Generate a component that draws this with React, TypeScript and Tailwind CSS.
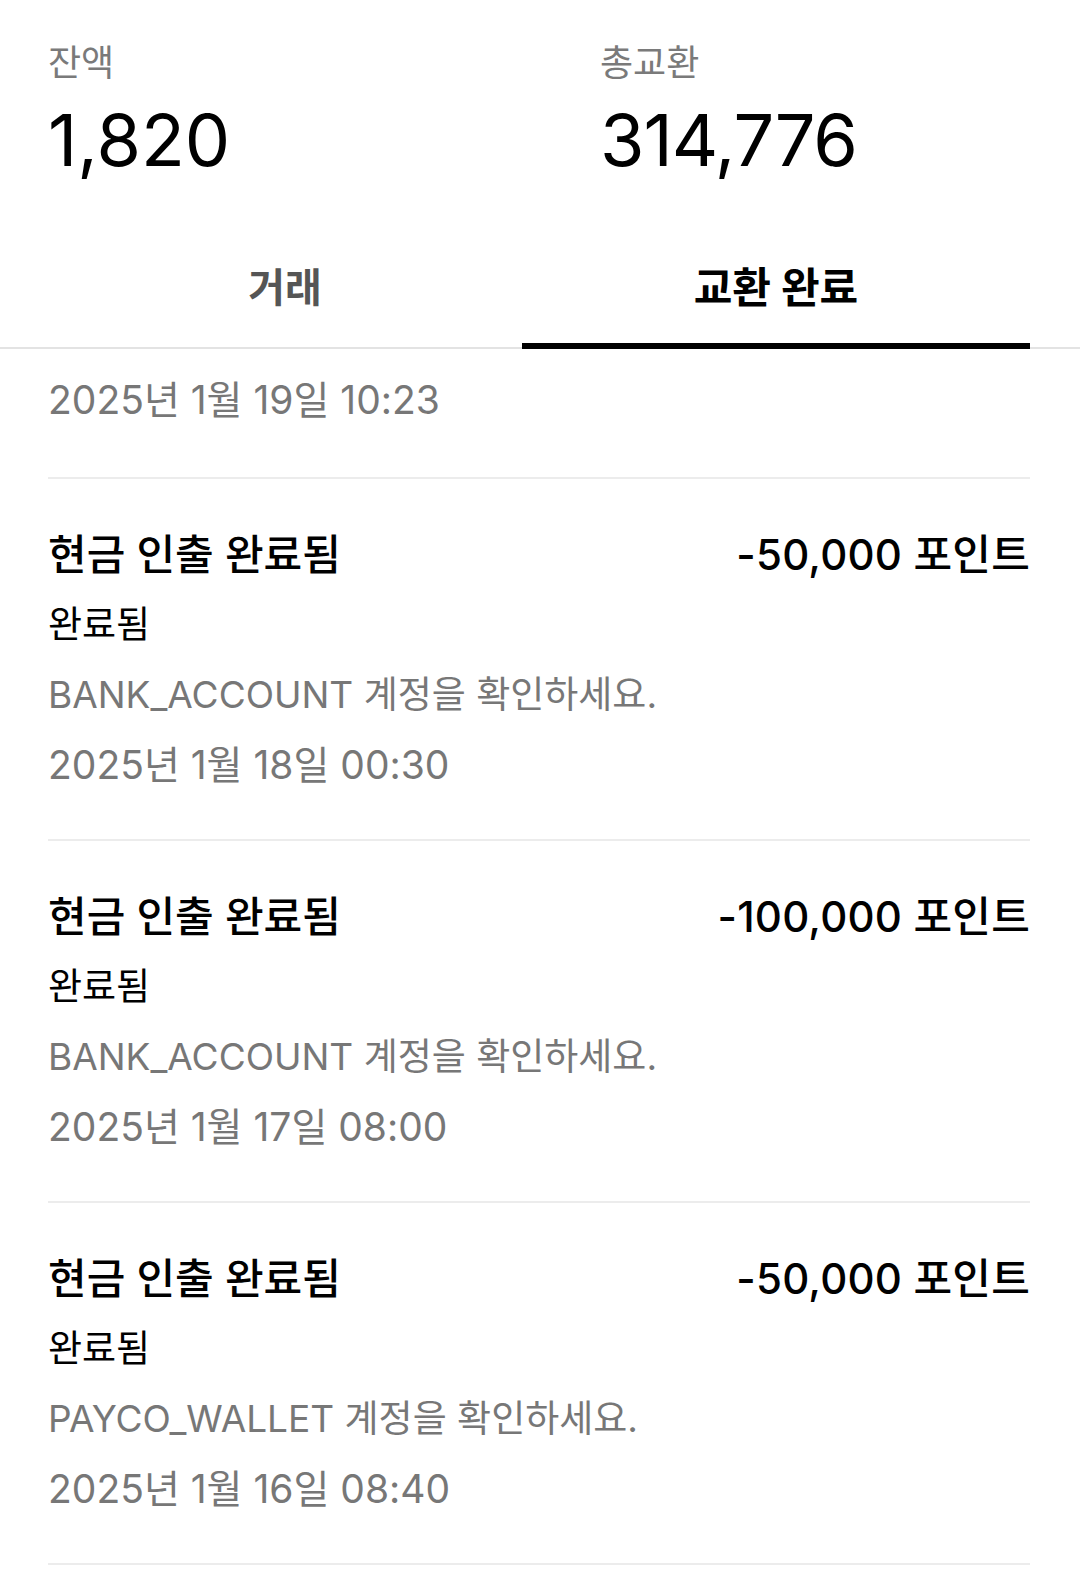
import React from "react";

const font = { fontFamily: 'Inter, "Noto Sans CJK KR", sans-serif' };

const items = [
	{ amount: "-50,000 포인트", account: "BANK_ACCOUNT", date: "2025년 1월 18일 00:30" },
	{ amount: "-100,000 포인트", account: "BANK_ACCOUNT", date: "2025년 1월 17일 08:00" },
	{ amount: "-50,000 포인트", account: "PAYCO_WALLET", date: "2025년 1월 16일 08:40" },
];

const Item = ({ item }: any) => {
	return (
		<div className="pt-[41px] pb-[39px] border-b-2 border-[#ececec]">
			<div className="flex items-center justify-between">
				<p className="text-[42px] leading-[70px] font-medium text-black">현금 인출 완료됨</p>
				<p className="text-[42px] leading-[70px] font-medium tracking-[0.2px] text-black">{item.amount}</p>
			</div>
			<p className="text-[37px] leading-[70px] text-black">완료됨</p>
			<p className="text-[37px] leading-[70px] text-[#777777]">{item.account} 계정을 확인하세요.</p>
			<p className="text-[39px] leading-[70px] text-[#777777]">{item.date}</p>
		</div>
	);
};

export default function App() {
	return (
		<div className="w-[1080px] min-h-[1569px] bg-white" style={font}>
			<div className="flex pt-[40px] pl-[48px]">
				<div className="w-[552px]">
					<p className="text-[36px] leading-[46px] text-[#7a7a7a]">잔액</p>
					<p className="mt-[10px] text-[72px] leading-[88px] text-black">1,820</p>
				</div>
				<div>
					<p className="text-[36px] leading-[46px] text-[#7a7a7a]">총교환</p>
					<p className="mt-[10px] text-[72px] leading-[88px] tracking-[-1px] text-black">314,776</p>
				</div>
			</div>

			<div className="mt-[74px] border-b-2 border-[#e3e3e3]">
				<div className="flex pl-[48px] -mb-[2px]">
					<div className="w-[474px] flex flex-col items-center">
						<p className="text-[40px] leading-[60px] font-semibold text-[#555555]">거래</p>
						<div className="mt-[25px] h-[6px]" />
					</div>
					<div className="w-[508px] flex flex-col items-center">
						<p className="text-[42px] leading-[60px] font-bold text-black">교환 완료</p>
						<div className="relative z-10 mt-[25px] h-[6px] w-full bg-black" />
					</div>
				</div>
			</div>

			<div className="pl-[48px] pr-[50px]">
				<div className="pt-[16px] pb-[42px] border-b-2 border-[#ececec]">
					<p className="text-[39px] leading-[70px] text-[#777777]">2025년 1월 19일 10:23</p>
				</div>
				{items.map((item, i) => (
					<Item key={i} item={item} />
				))}
			</div>
		</div>
	);
}
